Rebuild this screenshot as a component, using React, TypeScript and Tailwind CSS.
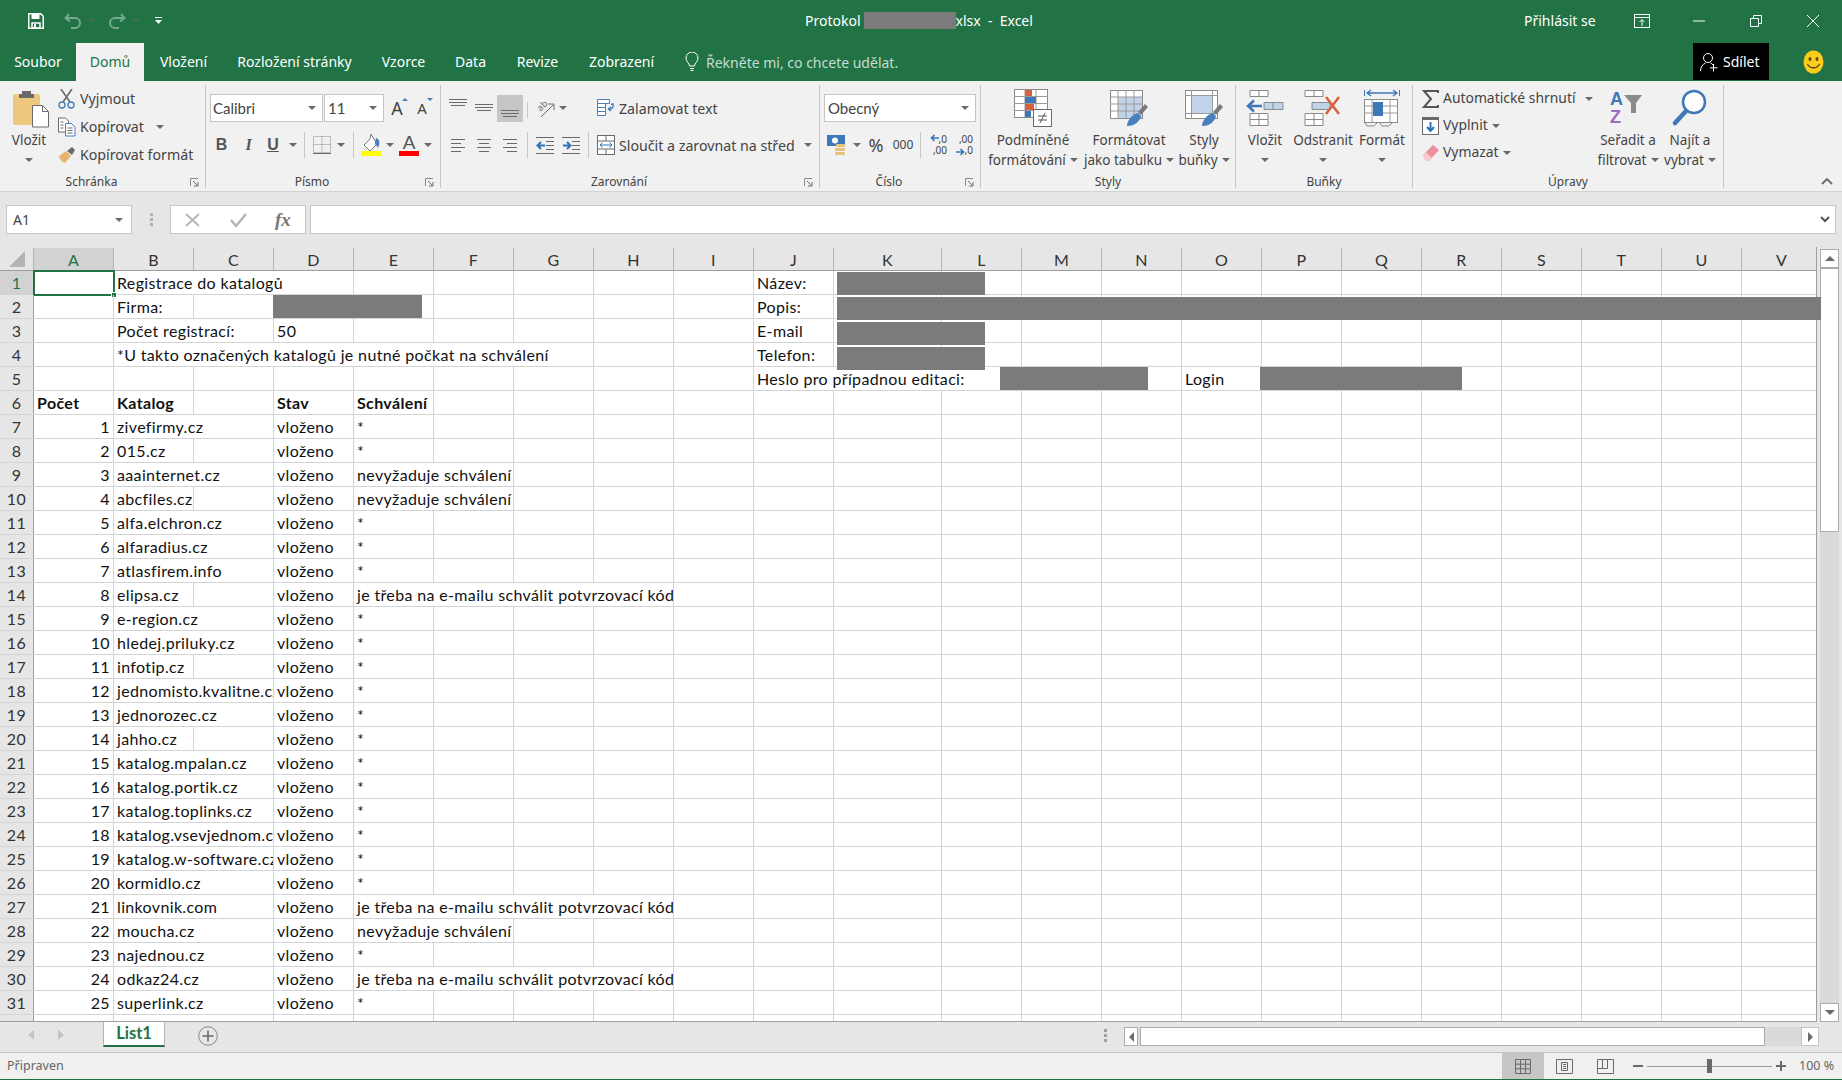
import { ReactNode } from 'react';

const colLetters = 'ABCDEFGHIJKLMNOPQRSTUV'.split('');
const colWidths = colLetters.map((l) => (l === 'K' ? 108 : 80));

type Cell = { c: number; t: string; span?: number; bold?: boolean; right?: boolean };

const catalog: [string, number, string][] = [
  ['zivefirmy.cz', 2, '*'],
  ['015.cz', 1, '*'],
  ['aaainternet.cz', 2, 'n'],
  ['abcfiles.cz', 1, 'n'],
  ['alfa.elchron.cz', 2, '*'],
  ['alfaradius.cz', 2, '*'],
  ['atlasfirem.info', 2, '*'],
  ['elipsa.cz', 1, 'j'],
  ['e-region.cz', 2, '*'],
  ['hledej.priluky.cz', 2, '*'],
  ['infotip.cz', 1, '*'],
  ['jednomisto.kvalitne.cz', 2, '*'],
  ['jednorozec.cz', 2, '*'],
  ['jahho.cz', 1, '*'],
  ['katalog.mpalan.cz', 2, '*'],
  ['katalog.portik.cz', 2, '*'],
  ['katalog.toplinks.cz', 2, '*'],
  ['katalog.vsevjednom.cz', 2, '*'],
  ['katalog.w-software.cz', 2, '*'],
  ['kormidlo.cz', 2, '*'],
  ['linkovnik.com', 2, 'j'],
  ['moucha.cz', 2, 'n'],
  ['najednou.cz', 2, '*'],
  ['odkaz24.cz', 2, 'j'],
  ['superlink.cz', 2, '*'],
  ['zlatestranky.cz', 2, '*'],
];

const topRows: Cell[][] = [
  [{ c: 1, t: 'Registrace do katalogů', span: 3 }, { c: 9, t: 'Název:' }],
  [{ c: 1, t: 'Firma:' }, { c: 9, t: 'Popis:' }],
  [{ c: 1, t: 'Počet registrací:', span: 2 }, { c: 3, t: '50' }, { c: 9, t: 'E-mail' }],
  [{ c: 1, t: '*U takto označených katalogů je nutné počkat na schválení', span: 6 }, { c: 9, t: 'Telefon:' }],
  [{ c: 9, t: 'Heslo pro případnou editaci:', span: 3 }, { c: 14, t: 'Login' }],
  [
    { c: 0, t: 'Počet', bold: true },
    { c: 1, t: 'Katalog', bold: true },
    { c: 3, t: 'Stav', bold: true },
    { c: 4, t: 'Schválení', bold: true },
  ],
];

const rows: Cell[][] = [
  ...topRows,
  ...catalog.map(([name, span, kind], i) => {
    const cells: Cell[] = [
      { c: 0, t: String(i + 1), right: true },
      { c: 1, t: name, span },
      { c: 3, t: 'vloženo' },
    ];
    if (kind === '*') cells.push({ c: 4, t: '*' });
    if (kind === 'n') cells.push({ c: 4, t: 'nevyžaduje schválení', span: 2 });
    if (kind === 'j') cells.push({ c: 4, t: 'je třeba na e-mailu schválit potvrzovací kód', span: 4 });
    return cells;
  }),
];

function Caret({ className = '' }: { className?: string }) {
  return (
    <svg width="8" height="4" viewBox="0 0 8 4" className={`shrink-0 ${className}`}>
      <polygon points="0,0 8,0 4,4" fill="#6a6a6a" />
    </svg>
  );
}

function Lines({ ys, xs }: { ys: number[]; xs: [number, number][] }) {
  return (
    <svg width="18" height="18" viewBox="0 0 18 18">
      {ys.map((y, i) => (
        <rect key={y} x={xs[i][0]} y={y} width={xs[i][1] - xs[i][0]} height="1" fill="#6a6a6a" />
      ))}
    </svg>
  );
}

function Launcher() {
  return (
    <svg width="9" height="9" viewBox="0 0 9 9">
      <path d="M.5 8V.5H8" fill="none" stroke="#8a8a8a" />
      <path d="M3 3l4 4M8 4v4H4" fill="none" stroke="#6a6a6a" />
    </svg>
  );
}

function Group({ w, label, launcher, children }: { w: string; label: string; launcher?: boolean; children: ReactNode }) {
  return (
    <div className={`${w} h-[103px] mt-[4px] flex flex-col border-r border-[#c6c6c6] shrink-0`}>
      <div className="h-[85px] flex">{children}</div>
      <div className="h-[18px] pt-[6px] flex items-center text-[12px] text-[#444444]">
        <div className="flex-1 text-center">{label}</div>
        {launcher ? (
          <div className="w-[22px] flex pl-[7px]">
            <Launcher />
          </div>
        ) : null}
      </div>
    </div>
  );
}

function BigButton({ w, icon, l1, l2 }: { w: string; icon: ReactNode; l1: string; l2?: string }) {
  return (
    <div className={`${w} flex flex-col items-center shrink-0`}>
      <div className="h-[45px] flex items-center justify-center">{icon}</div>
      <div className="h-[20px] leading-[20px] whitespace-nowrap">{l1}</div>
      <div className="h-[20px] flex items-center justify-center gap-[4px] whitespace-nowrap">
        {l2 ? <span>{l2}</span> : null}
        <Caret />
      </div>
    </div>
  );
}

function GridIcon({ large }: { large?: boolean }) {
  return (
    <svg width="40" height="38" viewBox="0 0 40 38">
      <rect x="1.5" y="1.5" width="32" height="28" fill="#fff" stroke="#8a8a8a" />
      {large ? (
        <>
          <rect x="8" y="7" width="20" height="17" fill="#c0d3e8" />
          <path d="M7.500 1.500v28M28.500 1.500v28M1.500 6.500h32M1.500 24.500h32" stroke="#9a9a9a" fill="none" />
        </>
      ) : (
        <>
          <rect x="9" y="8" width="24" height="21" fill="#c0d3e8" />
          <path d="M9 1.500v28M17 1.500v28M25 1.500v28M1.500 8h32M1.500 15h32M1.500 22h32" stroke="#9a9a9a" fill="none" />
        </>
      )}
      <path d="M29 23l7-8 3 3-7 8z" fill="#7a7a7a" />
      <path d="M18 37c0-5 5-12 11-13l3 3c-1 5-6 10-14 10z" fill="#4a7fbd" />
    </svg>
  );
}

function CellRow({ cells, index }: { cells: Cell[]; index: number }) {
  const out: ReactNode[] = [];
  let c = 0;
  while (c < colWidths.length) {
    const cell = cells.find((x) => x.c === c);
    const span = cell?.span ?? 1;
    const width = colWidths.slice(c, c + span).reduce((a, b) => a + b, 0);
    out.push(
      <div
        key={c}
        style={{ width }}
        className={`relative shrink-0 h-full border-r border-[#d4d4d4] whitespace-nowrap overflow-hidden leading-[24px] ${
          cell?.right ? 'text-right pr-[3px]' : 'pl-[3px]'
        } ${cell?.bold ? 'font-bold' : ''}`}
      >
        {cell?.t}
      </div>
    );
    c += span;
  }
  const selected = index === 0;
  return (
    <div className="h-[24px] flex shrink-0 border-b border-[#d4d4d4] relative">
      <div
        className={`w-[34px] shrink-0 border-r border-[#9e9e9e] text-center leading-[24px] ${
          selected ? 'bg-[#d2d2d2] text-[#217346]' : 'bg-[#e6e6e6] text-[#333333]'
        }`}
      >
        {index + 1}
      </div>
      {out}
      {selected ? (
        <div className="absolute left-[33px] top-[-1px] w-[82px] h-[26px] border-2 border-[#217346]">
          <div className="absolute right-[-4px] bottom-[-4px] w-[6px] h-[6px] bg-[#217346] border border-white" />
        </div>
      ) : null}
    </div>
  );
}

export default function App() {
  return (
    <div className="w-[1842px] h-[1080px] flex flex-col overflow-hidden bg-[#e6e6e6] font-['Noto_Sans',sans-serif] text-[13.5px] text-[#444444]">
      {/* Title bar */}
      <div className="h-[43px] shrink-0 bg-[#217346] flex items-center pr-[23px] pb-[2px] text-white text-[14px]">
        <div className="w-[805px] shrink-0 flex items-center pl-[28px]">
          <svg width="16" height="16" viewBox="0 0 16 16">
            <path d="M.75.75h12l2.5 2.5v12H.75z" fill="none" stroke="#fff" strokeWidth="1.5" />
            <rect x="3.5" y="1" width="8" height="5" fill="#fff" />
            <rect x="4" y="10" width="8" height="5" fill="none" stroke="#fff" strokeWidth="1.5" />
            <rect x="6" y="11" width="2" height="3" fill="#fff" />
          </svg>
          <svg width="18" height="16" viewBox="0 0 18 16" className="ml-[20px]">
            <path d="M5 1L1.5 5 6 8.5M2 5h9a5 5 0 0 1 0 10H7" fill="none" stroke="#76a88d" strokeWidth="2" />
          </svg>
          <Caret className="ml-[6px] opacity-40" />
          <svg width="18" height="16" viewBox="0 0 18 16" className="ml-[12px]">
            <path d="M13 1l3.5 4L12 8.5M16 5H7a5 5 0 0 0 0 10h4" fill="none" stroke="#76a88d" strokeWidth="2" />
          </svg>
          <Caret className="ml-[6px] opacity-40" />
          <svg width="7" height="7" viewBox="0 0 7 7" className="ml-[15px]">
            <path d="M0 .5h7" stroke="#fff" />
            <polygon points="0,3 7,3 3.5,7" fill="#fff" />
          </svg>
        </div>
        <div className="flex-1 flex items-center whitespace-nowrap">
          <span>Protokol</span>
          <span className="w-[92px] h-[17px] bg-[#7b7b7b] ml-[3px]" />
          <span>xlsx&nbsp; -&nbsp; Excel</span>
        </div>
        <div className="w-[70px] shrink-0 whitespace-nowrap">Přihlásit se</div>
        <svg width="16" height="14" viewBox="0 0 16 14" className="ml-[40px] shrink-0">
          <rect x=".5" y=".5" width="15" height="13" fill="none" stroke="#fff" />
          <path d="M1 3.5h14M8 12V6M5.5 8L8 5.5 10.5 8" fill="none" stroke="#fff" />
        </svg>
        <svg width="12" height="12" viewBox="0 0 12 12" className="ml-[43px] shrink-0">
          <path d="M0 6h12" stroke="#fff" />
        </svg>
        <svg width="12" height="12" viewBox="0 0 12 12" className="ml-[45px] shrink-0">
          <path d="M.5 3.5h8v8h-8zM3.5 3V.5h8v8H9" fill="none" stroke="#fff" />
        </svg>
        <svg width="12" height="12" viewBox="0 0 12 12" className="ml-[45px] shrink-0">
          <path d="M0 0l12 12M12 0L0 12" stroke="#fff" />
        </svg>
      </div>

      {/* Tabs */}
      <div className="h-[38px] shrink-0 bg-[#217346] flex text-white text-[14px]">
        <div className="w-[76px] pb-[2px] flex items-center justify-center">Soubor</div>
        <div className="w-[68px] pb-[2px] flex items-center justify-center bg-[#f1f1f1] text-[#217346]">Domů</div>
        <div className="w-[79px] pb-[2px] flex items-center justify-center">Vložení</div>
        <div className="w-[143px] pb-[2px] flex items-center justify-center">Rozložení stránky</div>
        <div className="w-[75px] pb-[2px] flex items-center justify-center">Vzorce</div>
        <div className="w-[59px] pb-[2px] flex items-center justify-center">Data</div>
        <div className="w-[75px] pb-[2px] flex items-center justify-center">Revize</div>
        <div className="w-[93px] pb-[2px] flex items-center justify-center">Zobrazení</div>
        <div className="flex items-center ml-[17px] w-[1008px] text-[#c4dccf]">
          <svg width="14" height="20" viewBox="0 0 14 20">
            <path d="M4.5 14c0-3-3.5-4-3.5-8a6 6 0 0 1 12 0c0 4-3.500 5-3.500 8zM5 16.500h4M5.500 18.500h3" fill="none" stroke="#fff" />
          </svg>
          <span className="ml-[7px]">Řekněte mi, co chcete udělat.</span>
        </div>
        <div className="w-[76px] h-[37px] bg-black flex items-center pl-[7px] gap-[5px]">
          <svg width="18" height="20" viewBox="0 0 18 20">
            <circle cx="8" cy="6" r="4.500" fill="none" stroke="#fff" />
            <path d="M.5 19c0-4 2-6.500 5-8M10.500 11c1 .5 2 1 2.500 2" fill="none" stroke="#fff" />
            <path d="M13.500 12v7.500M10 15.800h7.500" stroke="#fff" />
          </svg>
          <span>Sdílet</span>
        </div>
        <div className="flex items-center ml-[34px]">
          <svg width="21" height="24" viewBox="0 0 21 24">
            <ellipse cx="10.500" cy="12" rx="10" ry="11.500" fill="#fbcc1b" />
            <ellipse cx="7" cy="9" rx="1.500" ry="2" fill="#5a4a10" />
            <ellipse cx="14" cy="9" rx="1.500" ry="2" fill="#5a4a10" />
            <path d="M4.500 14c2 5 10 5 12 0" fill="none" stroke="#5a4a10" strokeWidth="1.300" />
          </svg>
        </div>
      </div>

      {/* Ribbon */}
      <div className="h-[111px] shrink-0 bg-[#f1f1f1] border-b border-[#d2d2d2] flex">
        <Group w="w-[206px]" label="Schránka" launcher>
          <div className="w-[58px] shrink-0 flex flex-col items-center">
            <div className="h-[45px] pl-[13px] pt-[5px] self-start">
              <svg width="37" height="38" viewBox="0 0 37 38">
                <rect x="0" y="4" width="27" height="31" rx="2" fill="#edc87e" />
                <path d="M9 4V1h9v3h3v4H6V4z" fill="#6a6a6a" />
                <path d="M19.500 15.500h10l6 6v15.500h-16z" fill="#fff" stroke="#6a6a6a" />
                <path d="M29.500 16v5.500H35" fill="none" stroke="#6a6a6a" />
              </svg>
            </div>
            <div className="h-[20px] leading-[20px]">Vložit</div>
            <div className="h-[20px] flex items-center">
              <Caret />
            </div>
          </div>
          <div className="flex flex-col text-[14.2px]">
            <div className="h-[28px] flex items-center gap-[4px]">
              <svg width="18" height="20" viewBox="0 0 18 20">
                <path d="M3 0l9 13M14 0L5 13" stroke="#6a6a6a" strokeWidth="1.600" />
                <circle cx="4" cy="16" r="3" fill="none" stroke="#4a7fbd" strokeWidth="1.400" />
                <circle cx="13" cy="16" r="3" fill="none" stroke="#4a7fbd" strokeWidth="1.400" />
              </svg>
              <span>Vyjmout</span>
            </div>
            <div className="h-[28px] flex items-center gap-[4px]">
              <svg width="18" height="20" viewBox="0 0 18 20">
                <path d="M.5 1h7l3 3v11h-10z" fill="#fff" stroke="#6a6a6a" />
                <path d="M7.500 6.500h6l3.500 3.500v9H7.500z" fill="#fff" stroke="#4a7fbd" />
                <path d="M2.500 5h3M2.500 8h3M2.500 11h3M9.500 11h5M9.500 13.500h5M9.500 16h5" stroke="#6a6a6a" />
              </svg>
              <span>Kopírovat</span>
              <Caret className="ml-[8px]" />
            </div>
            <div className="h-[28px] flex items-center gap-[4px]">
              <svg width="18" height="18" viewBox="0 0 18 18">
                <path d="M1 10l7-5 5 5-6 7c-2 0-6-4-6-7z" fill="#e6b56d" />
                <path d="M9 5l5-4 3 3-3 5z" fill="#6a6a6a" />
              </svg>
              <span>Kopírovat formát</span>
            </div>
          </div>
        </Group>

        <Group w="w-[235px]" label="Písmo" launcher>
          <div className="flex flex-col pl-[4px] pt-[9px]">
            <div className="h-[28px] flex items-center">
              <div className="w-[113px] h-[28px] bg-white border border-[#c6c6c6] flex items-center justify-between pl-[2px] pr-[6px] font-['Lato',sans-serif] text-[15px]">
                <span>Calibri</span>
                <Caret />
              </div>
              <div className="w-[60px] h-[28px] ml-[1px] bg-white border border-[#c6c6c6] flex items-center justify-between pl-[3px] pr-[6px] font-['Lato',sans-serif] text-[15px]">
                <span>11</span>
                <Caret />
              </div>
              <div className="relative w-[24px] ml-[1px] text-center text-[18px] leading-[20px]">
                A<svg width="6" height="3" viewBox="0 0 6 3" className="absolute right-[1px] top-0"><polygon points="3,0 6,3 0,3" fill="#4a7fbd" /></svg>
              </div>
              <div className="relative w-[24px] ml-[1px] text-center text-[15px] leading-[20px]">
                A<svg width="6" height="3" viewBox="0 0 6 3" className="absolute right-[1px] top-0"><polygon points="0,0 6,0 3,3" fill="#4a7fbd" /></svg>
              </div>
            </div>
            <div className="h-[28px] mt-[9px] -ml-[2px] flex items-center text-[#555555]">
              <div className="w-[27px] text-center font-bold text-[16px] font-['Liberation_Sans',sans-serif]">B</div>
              <div className="w-[27px] text-center italic font-bold text-[16px] font-['Liberation_Serif',serif]">I</div>
              <div className="w-[22px] text-center font-bold text-[16px] underline font-['Liberation_Sans',sans-serif]">U</div>
              <div className="w-[18px] flex justify-center">
                <Caret />
              </div>
              <div className="w-px h-[26px] bg-[#c6c6c6] ml-[2px]" />
              <div className="ml-[8px]">
                <svg width="18" height="18" viewBox="0 0 18 18">
                  <path d="M.5.5h17v16H.5zM9 .5v16M.5 8.500h17" fill="none" stroke="#8a8a8a" strokeDasharray="1 1" />
                  <path d="M0 17.500h18" stroke="#6a6a6a" />
                </svg>
              </div>
              <div className="w-[20px] flex justify-center">
                <Caret />
              </div>
              <div className="w-px h-[26px] bg-[#c6c6c6] ml-[2px]" />
              <div className="ml-[7px]">
                <svg width="20" height="22" viewBox="0 0 20 22">
                  <path d="M10 0l-1 5-6 6 6 6 7-7z" fill="#fff" stroke="#777" />
                  <path d="M15 4c3 1 4 4 3 7l-1 3c-1-3-3-3-3-5z" fill="#4a7fbd" />
                  <rect x="0" y="17" width="20" height="5" fill="#ffff00" />
                </svg>
              </div>
              <div className="w-[18px] flex justify-center">
                <Caret />
              </div>
              <div className="w-[20px] flex flex-col items-center">
                <span className="text-[19px] leading-[17px] font-['Liberation_Sans',sans-serif]">A</span>
                <div className="w-[20px] h-[5px] bg-[#ff0000]" />
              </div>
              <div className="w-[18px] flex justify-center">
                <Caret />
              </div>
            </div>
          </div>
        </Group>

        <Group w="w-[379px]" label="Zarovnání" launcher>
          <div className="flex flex-col pl-[4px] pt-[9px]">
            <div className="h-[28px] flex items-center">
              <div className="w-[152px] flex items-center shrink-0">
                <div className="w-[26px] h-[27px] flex items-start justify-center pt-[1px]">
                  <Lines ys={[3, 6, 9]} xs={[[0, 18], [0, 18], [2, 16]]} />
                </div>
                <div className="w-[26px] h-[27px] flex items-center justify-center">
                  <Lines ys={[5, 8, 11]} xs={[[0, 18], [0, 18], [2, 16]]} />
                </div>
                <div className="w-[26px] h-[27px] flex items-end justify-center bg-[#c6c6c6]">
                  <Lines ys={[6, 9, 12]} xs={[[0, 18], [0, 18], [2, 16]]} />
                </div>
                <div className="w-px h-[16px] bg-[#c6c6c6] ml-[4px] mt-[3px]" />
                <div className="ml-[7px]">
                  <svg width="20" height="20" viewBox="0 0 20 20">
                    <text x="2" y="11" fontSize="9" fill="#6a6a6a" transform="rotate(-45 7 8)">ab</text>
                    <path d="M6 19L18 7M13 6h6v6" fill="none" stroke="#6a6a6a" />
                  </svg>
                </div>
                <Caret className="ml-[4px]" />
              </div>
              <div className="flex items-center gap-[4px] whitespace-nowrap text-[14.2px]">
                <svg width="18" height="20" viewBox="0 0 18 20">
                  <path d="M.5 1.500h12v4H.5zM.5 5.500h8v4H.5zM.5 9.500h8v4H.5zM.5 13.500h8v4H.5z" fill="#fff" stroke="#4a7fbd" />
                  <path d="M11 11c4 1 6-2 5-5l-2 .5M11 11l3-2M11 11l3 2" fill="none" stroke="#4a7fbd" strokeWidth="1.500" />
                </svg>
                <span className="pt-[2px]">Zalamovat text</span>
              </div>
            </div>
            <div className="h-[28px] mt-[9px] flex items-center">
              <div className="w-[152px] flex items-center shrink-0">
                <div className="w-[26px] flex justify-center">
                  <Lines ys={[3, 7, 11, 15]} xs={[[2, 16], [2, 12], [2, 16], [2, 12]]} />
                </div>
                <div className="w-[26px] flex justify-center">
                  <Lines ys={[3, 7, 11, 15]} xs={[[2, 16], [4, 14], [2, 16], [4, 14]]} />
                </div>
                <div className="w-[26px] flex justify-center">
                  <Lines ys={[3, 7, 11, 15]} xs={[[2, 16], [6, 16], [2, 16], [6, 16]]} />
                </div>
                <div className="w-px h-[26px] bg-[#c6c6c6] ml-[4px]" />
                <div className="ml-[8px]">
                  <svg width="18" height="18" viewBox="0 0 18 18">
                    <path d="M0 1.500h18M10 5.500h8M10 9.500h8M10 13.500h8M0 17.500h18" stroke="#6a6a6a" />
                    <path d="M9 9.500H2M5 6L1.500 9.500 5 13" fill="none" stroke="#2f75b5" strokeWidth="2" />
                  </svg>
                </div>
                <div className="ml-[8px]">
                  <svg width="18" height="18" viewBox="0 0 18 18">
                    <path d="M0 1.500h18M10 5.500h8M10 9.500h8M10 13.500h8M0 17.500h18" stroke="#6a6a6a" />
                    <path d="M1 9.500h7M5 6l3.500 3.500L5 13" fill="none" stroke="#2f75b5" strokeWidth="2" />
                  </svg>
                </div>
                <div className="w-px h-[26px] bg-[#c6c6c6] ml-[8px]" />
              </div>
              <div className="flex items-center gap-[4px] whitespace-nowrap text-[14.2px]">
                <svg width="18" height="22" viewBox="0 0 18 22">
                  <rect x=".5" y="1.500" width="17" height="19" fill="#fff" stroke="#6a6a6a" />
                  <path d="M.5 7h17M.5 15h17M9 1.500V7M9 15v5.500" stroke="#6a6a6a" />
                  <path d="M3 11h12M5.500 8.500L3 11l2.500 2.500M12.500 8.500L15 11l-2.500 2.500" fill="none" stroke="#2f75b5" />
                </svg>
                <span className="pt-[2px]">Sloučit a zarovnat na střed</span>
                <Caret className="ml-[5px]" />
              </div>
            </div>
          </div>
        </Group>

        <Group w="w-[161px]" label="Číslo" launcher>
          <div className="flex flex-col pl-[4px] pt-[9px]">
            <div className="w-[152px] h-[28px] bg-white border border-[#c6c6c6] flex items-center justify-between pl-[3px] pr-[6px] font-['Lato',sans-serif] text-[15px]">
              <span>Obecný</span>
              <Caret />
            </div>
            <div className="h-[28px] mt-[9px] pl-[3px] flex items-center">
              <svg width="20" height="22" viewBox="0 0 20 22">
                <rect x="0" y="1" width="18" height="11" fill="#3e78b9" />
                <circle cx="8" cy="6.500" r="3" fill="#fff" />
                <rect x="9" y="10" width="9" height="3" rx="1" fill="#e8c47b" />
                <rect x="8" y="14" width="10" height="3" rx="1" fill="#e8c47b" />
                <rect x="8" y="18" width="10" height="3" rx="1" fill="#e8c47b" />
              </svg>
              <Caret className="ml-[6px]" />
              <span className="w-[30px] text-center text-[18px]">%</span>
              <span className="w-[24px] text-center text-[12px]">000</span>
              <div className="w-px h-[26px] bg-[#c6c6c6] ml-[5px]" />
              <div className="ml-[9px] w-[17px] text-[10px] leading-[11px] text-right relative">
                <div>,0</div>
                <div>,00</div>
                <svg width="9" height="8" viewBox="0 0 9 8" className="absolute left-0 top-0">
                  <path d="M9 4H2M4.500 1L1.500 4l3 3" fill="none" stroke="#2f75b5" strokeWidth="1.600" />
                </svg>
              </div>
              <div className="ml-[9px] w-[17px] text-[10px] leading-[11px] text-right relative">
                <div>,00</div>
                <div>,0</div>
                <svg width="9" height="8" viewBox="0 0 9 8" className="absolute left-0 bottom-0">
                  <path d="M0 4h7M4.500 1l3 3-3 3" fill="none" stroke="#2f75b5" strokeWidth="1.600" />
                </svg>
              </div>
            </div>
          </div>
        </Group>

        <Group w="w-[255px]" label="Styly">
          <BigButton
            w="w-[104px]"
            l1="Podmíněné"
            l2="formátování"
            icon={
              <svg width="38" height="38" viewBox="0 0 38 38">
                <rect x=".5" y=".5" width="33" height="28" fill="#fff" stroke="#8a8a8a" />
                <path d="M11 .5v28M22 .5v28M.5 7.500h33M.5 14.500h33M.5 21.500h33" stroke="#9a9a9a" />
                <rect x="11" y="1" width="7" height="6" fill="#d9603f" />
                <rect x="11" y="8" width="11" height="6" fill="#3e78b9" />
                <rect x="11" y="15" width="9" height="6" fill="#d9603f" />
                <rect x="11" y="22" width="6" height="6" fill="#3e78b9" />
                <rect x="19.500" y="20.500" width="18" height="17" fill="#fff" stroke="#6a6a6a" />
                <path d="M24 27h9M24 31h9M31 24l-5 10" stroke="#555" />
              </svg>
            }
          />
          <BigButton w="w-[88px]" l1="Formátovat" l2="jako tabulku" icon={<GridIcon />} />
          <BigButton w="w-[62px]" l1="Styly" l2="buňky" icon={<GridIcon large />} />
        </Group>

        <Group w="w-[177px]" label="Buňky">
          <BigButton
            w="w-[58px]"
            l1="Vložit"
            icon={
              <svg width="38" height="36" viewBox="0 0 38 36">
                <path d="M4 .5h18v6H4zM13 .500v6M4 23.500h18v12H4zM13 23.500v12M4 29.500h18" fill="#fff" stroke="#8a8a8a" />
                <path d="M18 12.500h19v7H18zM27 12.500v7" fill="#c0d3e8" stroke="#8a8a8a" />
                <path d="M16 16H3M8 10.500L2 16l6 5.500" fill="none" stroke="#3e78b9" strokeWidth="2.500" />
              </svg>
            }
          />
          <BigButton
            w="w-[58px]"
            l1="Odstranit"
            icon={
              <svg width="38" height="36" viewBox="0 0 38 36">
                <path d="M1 .5h18v6H1zM10 .500v6M1 23.500h18v12H1zM10 23.500v12M1 29.500h18" fill="#fff" stroke="#8a8a8a" />
                <path d="M8 12.500h18v7H8z" fill="#c0d3e8" stroke="#8a8a8a" />
                <path d="M22 7l13 17M35 7L22 24" fill="none" stroke="#d9603f" strokeWidth="2.500" />
              </svg>
            }
          />
          <BigButton
            w="w-[60px]"
            l1="Formát"
            icon={
              <svg width="36" height="38" viewBox="0 0 36 38">
                <path d="M.5 1v6M35.500 1v6" stroke="#3e78b9" />
                <path d="M3 4h30M7 1L3 4l4 3M29 1l4 3-4 3" fill="none" stroke="#3e78b9" strokeWidth="1.300" />
                <rect x=".5" y="10.500" width="33" height="23" fill="#fff" stroke="#8a8a8a" />
                <path d="M8 10.500v23M26 10.500v23M.5 17h33M.5 24h33" stroke="#9a9a9a" />
                <rect x="9" y="13" width="10" height="14" fill="#3e78b9" />
                <path d="M1 34l2 3h7l3-3M16 34l2 3h7l3-3" fill="none" stroke="#8a8a8a" />
              </svg>
            }
          />
        </Group>

        <Group w="w-[311px]" label="Úpravy">
          <div className="w-[183px] shrink-0 flex flex-col pl-[9px] text-[13.9px]">
            <div className="h-[27px] flex items-center gap-[3px] whitespace-nowrap">
              <svg width="18" height="18" viewBox="0 0 18 18">
                <path d="M16 3V1H2l7 8-7 8h14v-2" fill="none" stroke="#555" strokeWidth="2" />
              </svg>
              <span>Automatické shrnutí</span>
              <Caret className="ml-[6px]" />
            </div>
            <div className="h-[27px] flex items-center gap-[3px]">
              <svg width="18" height="18" viewBox="0 0 18 18">
                <rect x=".5" y=".5" width="16" height="17" fill="#fff" stroke="#6a6a6a" />
                <rect x="0" y="0" width="17" height="3" fill="#6a6a6a" />
                <path d="M8.500 5v9M5 10l3.500 4L12 10" fill="none" stroke="#2f75b5" strokeWidth="2" />
              </svg>
              <span>Vyplnit</span>
              <Caret className="ml-[1px]" />
            </div>
            <div className="h-[27px] flex items-center gap-[3px]">
              <svg width="18" height="18" viewBox="0 0 18 18">
                <path d="M1 11l10-10 6 5L7 17H4z" fill="#ee8f9f" />
                <path d="M1 11l3-3 6 6-3 3H4z" fill="#f8c8d0" />
              </svg>
              <span>Vymazat</span>
              <Caret className="ml-[1px]" />
            </div>
          </div>
          <BigButton
            w="w-[64px]"
            l1="Seřadit a"
            l2="filtrovat"
            icon={
              <div className="flex items-center pr-[4px]">
                <div className="flex flex-col text-[18px] leading-[18px] font-bold font-['Liberation_Sans',sans-serif]">
                  <span className="text-[#3e78b9]">A</span>
                  <span className="text-[#9b6bc2]">Z</span>
                </div>
                <svg width="18" height="18" viewBox="0 0 18 18" className="ml-[1px] -mt-[8px]">
                  <path d="M0 0h18l-6 8v10H7V8z" fill="#8a8a8a" />
                </svg>
              </div>
            }
          />
          <BigButton
            w="w-[60px]"
            l1="Najít a"
            l2="vybrat"
            icon={
              <svg width="36" height="38" viewBox="0 0 36 38">
                <circle cx="22" cy="13" r="11" fill="#fff" stroke="#3e78b9" strokeWidth="2.500" />
                <path d="M14 22L3 34" stroke="#3e78b9" strokeWidth="4.500" strokeLinecap="round" />
              </svg>
            }
          />
        </Group>

        <div className="flex-1 flex items-end justify-end pr-[9px] pb-[6px]">
          <svg width="12" height="7" viewBox="0 0 12 7">
            <path d="M1 6l5-5 5 5" fill="none" stroke="#6a6a6a" strokeWidth="1.800" />
          </svg>
        </div>
      </div>

      {/* Formula bar */}
      <div className="h-[55px] shrink-0 flex pt-[13px]">
        <div className="w-[126px] h-[29px] ml-[6px] bg-white border border-[#c6c6c6] flex items-center justify-between pl-[6px] pr-[8px]">
          <span className="text-[14px]">A1</span>
          <Caret />
        </div>
        <div className="w-[38px] flex items-center justify-center h-[29px]">
          <svg width="3" height="14" viewBox="0 0 3 14">
            <rect width="3" height="3" fill="#b0b0b0" />
            <rect y="5" width="3" height="3" fill="#b0b0b0" />
            <rect y="10" width="3" height="3" fill="#b0b0b0" />
          </svg>
        </div>
        <div className="w-[136px] h-[29px] bg-white border border-[#c6c6c6] flex items-center pl-[14px]">
          <svg width="16" height="14" viewBox="0 0 16 14">
            <path d="M1 1l13 12M14 1L1 13" stroke="#b5b5b5" strokeWidth="2" />
          </svg>
          <svg width="18" height="14" viewBox="0 0 18 14" className="ml-[29px]">
            <path d="M1 7l5 6L16 1" fill="none" stroke="#b5b5b5" strokeWidth="2.500" />
          </svg>
          <span className="ml-[27px] italic font-bold text-[19px] leading-none text-[#777777] font-['Liberation_Serif',serif]">fx</span>
        </div>
        <div className="w-[1526px] h-[29px] ml-[4px] bg-white border border-[#c6c6c6] flex items-center justify-end pr-[5px]">
          <svg width="10" height="7" viewBox="0 0 10 7">
            <path d="M1 1l4 4 4-4" fill="none" stroke="#555" strokeWidth="2" />
          </svg>
        </div>
      </div>

      {/* Sheet */}
      <div className="h-[775px] shrink-0 flex relative font-['Lato',sans-serif] text-[16px] tracking-[0.35px] text-[#111111]">
        <div className="w-[1817px] shrink-0 flex flex-col overflow-hidden bg-white border-r border-b border-[#9e9e9e]">
          <div className="h-[24px] flex shrink-0 bg-[#e6e6e6] border-b border-[#9e9e9e] pt-px">
            <div className="w-[34px] shrink-0 border-r border-[#b5b5b5] flex items-center justify-center">
              <svg width="16" height="16" viewBox="0 0 16 16">
                <polygon points="16,0 16,16 0,16" fill="#b4b4b4" />
              </svg>
            </div>
            {colLetters.map((l, i) => (
              <div
                key={l}
                style={{ width: colWidths[i] }}
                className={`shrink-0 border-r border-[#b5b5b5] text-center leading-[23px] ${
                  i === 0 ? 'bg-[#d2d2d2] text-[#217346]' : 'text-[#333333]'
                }`}
              >
                {l}
              </div>
            ))}
          </div>
          {rows.map((cells, i) => (
            <CellRow key={i} cells={cells} index={i} />
          ))}
        </div>

        <div className="w-[19px] ml-[3px] shrink-0 flex flex-col pt-[2px]">
          <div className="h-[19px] bg-white border border-[#ababab] flex items-center justify-center">
            <svg width="10" height="5" viewBox="0 0 10 5"><polygon points="5,0 10,5 0,5" fill="#6a6a6a" /></svg>
          </div>
          <div className="flex-1 flex flex-col bg-[#dadada]">
            <div className="h-[264px] bg-white border border-[#ababab]" />
          </div>
          <div className="h-[19px] bg-white border border-[#ababab] flex items-center justify-center">
            <svg width="10" height="5" viewBox="0 0 10 5"><polygon points="0,0 10,0 5,5" fill="#6a6a6a" /></svg>
          </div>
        </div>

        {/* redactions */}
        <div className="absolute left-[273px] top-[48px] w-[149px] h-[23px] bg-[#7b7b7b]" />
        <div className="absolute left-[837px] top-[25px] w-[148px] h-[23px] bg-[#7b7b7b]" />
        <div className="absolute left-[837px] top-[50px] w-[984px] h-[23px] bg-[#7b7b7b]" />
        <div className="absolute left-[837px] top-[75px] w-[148px] h-[23px] bg-[#7b7b7b]" />
        <div className="absolute left-[837px] top-[100px] w-[148px] h-[23px] bg-[#7b7b7b]" />
        <div className="absolute left-[1000px] top-[120px] w-[148px] h-[23px] bg-[#7b7b7b]" />
        <div className="absolute left-[1260px] top-[120px] w-[202px] h-[23px] bg-[#7b7b7b]" />
      </div>

      {/* Sheet tabs + horizontal scrollbar */}
      <div className="h-[30px] shrink-0 flex items-start">
        <div className="w-[103px] h-[26px] flex items-center pl-[28px] gap-[24px]">
          <svg width="6" height="10" viewBox="0 0 6 10"><polygon points="6,0 6,10 0,5" fill="#c4c4c4" /></svg>
          <svg width="6" height="10" viewBox="0 0 6 10"><polygon points="0,0 0,10 6,5" fill="#c4c4c4" /></svg>
        </div>
        <div className="w-[62px] h-[26px] -mt-px bg-white border-x border-b-2 border-x-[#b5b5b5] border-b-[#217346] text-center text-[#217346] font-bold text-[16.5px] font-['Lato',sans-serif] leading-[24px]">
          List1
        </div>
        <div className="w-[931px] h-[28px] flex items-center pl-[33px]">
          <svg width="20" height="20" viewBox="0 0 20 20">
            <circle cx="10" cy="10" r="9.300" fill="none" stroke="#8a8a8a" />
            <path d="M10 4.500v11M4.500 10h11" stroke="#6a6a6a" strokeWidth="1.500" />
          </svg>
        </div>
        <div className="h-[26px] w-[19px] flex items-center justify-center">
          <svg width="3" height="13" viewBox="0 0 3 13">
            <rect width="3" height="3" fill="#a0a0a0" />
            <rect y="5" width="3" height="3" fill="#a0a0a0" />
            <rect y="10" width="3" height="3" fill="#a0a0a0" />
          </svg>
        </div>
        <div className="w-[677px] h-[19px] mt-[5px] flex ml-[9px] bg-[#dadada]">
          <div className="w-[14px] bg-white border border-[#ababab] flex items-center justify-center">
            <svg width="5" height="10" viewBox="0 0 5 10"><polygon points="5,0 5,10 0,5" fill="#6a6a6a" /></svg>
          </div>
          <div className="w-[625px] ml-[2px] bg-white border border-[#ababab]" />
        </div>
        <div className="w-[18px] h-[19px] mt-[5px] bg-white border border-[#c6c6c6] flex items-center justify-center">
          <svg width="5" height="10" viewBox="0 0 5 10"><polygon points="0,0 0,10 5,5" fill="#6a6a6a" /></svg>
        </div>
      </div>

      {/* Status bar */}
      <div className="h-[27px] shrink-0 bg-[#f0f0f0] border-t border-[#c6c6c6] flex items-center text-[12.5px] text-[#666666]">
        <span className="ml-[7px] w-[1495px]">Připraven</span>
        <div className="w-[42px] h-full bg-[#c6c6c6] flex items-center justify-center">
          <svg width="16" height="15" viewBox="0 0 16 15">
            <path d="M.5.500h15v14H.5zM5.500.500v14M10.500.500v14M.5 5.200h15M.5 9.800h15" fill="none" stroke="#6a6a6a" />
          </svg>
        </div>
        <div className="w-[41px] flex justify-center">
          <svg width="17" height="15" viewBox="0 0 17 15">
            <path d="M.5.500h16v14H.5zM5.500 3.500h6v8h-6zM7 5.500h3M7 7.500h3M7 9.500h3" fill="none" stroke="#6a6a6a" />
          </svg>
        </div>
        <div className="w-[41px] flex justify-center">
          <svg width="17" height="15" viewBox="0 0 17 15">
            <path d="M.5.500h16v14H.5zM.5 9.500h10v-9M5.500.500v9" fill="none" stroke="#6a6a6a" />
          </svg>
        </div>
        <div className="w-[10px] h-[2px] bg-[#6a6a6a] ml-[7px]" />
        <div className="relative w-[125px] h-px bg-[#9a9a9a] ml-[4px]">
          <div className="absolute left-[60px] top-[-7px] w-[5px] h-[14px] bg-[#6a6a6a]" />
        </div>
        <svg width="10" height="10" viewBox="0 0 10 10" className="ml-[4px]">
          <path d="M5 0v10M0 5h10" stroke="#6a6a6a" strokeWidth="2" />
        </svg>
        <span className="ml-[13px] whitespace-nowrap">100 %</span>
      </div>
      <div className="h-[1px] shrink-0 bg-[#217346]" />
    </div>
  );
}
